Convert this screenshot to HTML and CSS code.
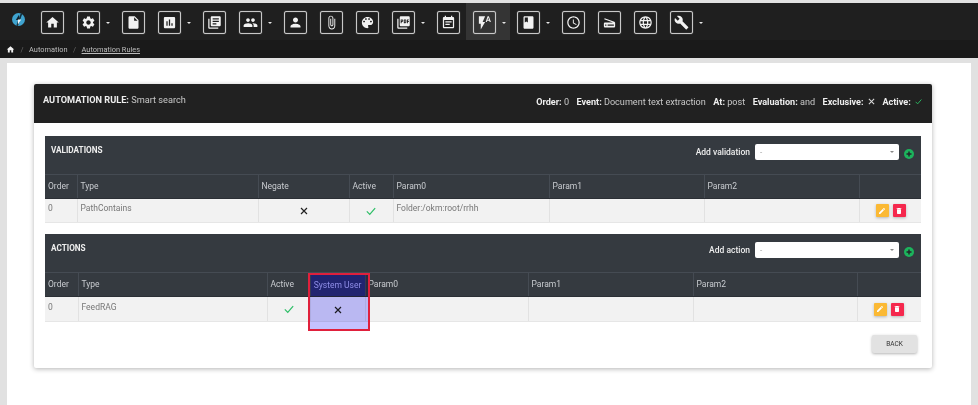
FILE: index.html
```html
<!DOCTYPE html>
<html lang="en">
<head>
    <meta charset="UTF-8">
    <meta name="viewport" content="width=device-width, initial-scale=1.0">
    <title>Automation Rules</title>
    <link rel="stylesheet" href="styles.css">
</head>
<body>
    <svg class="sprite" xmlns="http://www.w3.org/2000/svg">
        <symbol id="i-home" viewBox="0 0 24 24"><path d="M10 20v-6h4v6h5v-8h3L12 3 2 12h3v8z"/></symbol>
        <symbol id="i-gear" viewBox="0 0 24 24"><path d="M19.14 12.94c.04-.3.06-.61.06-.94 0-.32-.02-.64-.07-.94l2.03-1.58c.18-.14.23-.41.12-.61l-1.92-3.32c-.12-.22-.37-.29-.59-.22l-2.39.96c-.5-.38-1.03-.7-1.62-.94l-.36-2.54c-.04-.24-.24-.41-.48-.41h-3.84c-.24 0-.43.17-.47.41l-.36 2.54c-.59.24-1.13.57-1.62.94l-2.39-.96c-.22-.08-.47 0-.59.22L2.74 8.87c-.12.21-.08.47.12.61l2.03 1.58c-.05.3-.09.63-.09.94s.02.64.07.94l-2.03 1.58c-.18.14-.23.41-.12.61l1.92 3.32c.12.22.37.29.59.22l2.39-.96c.5.38 1.03.7 1.62.94l.36 2.54c.05.24.24.41.48.41h3.84c.24 0 .44-.17.47-.41l.36-2.54c.59-.24 1.13-.56 1.62-.94l2.39.96c.22.08.47 0 .59-.22l1.92-3.32c.12-.22.07-.47-.12-.61l-2.01-1.58zM12 15.6c-1.98 0-3.6-1.62-3.6-3.6s1.62-3.6 3.6-3.6 3.6 1.62 3.6 3.6-1.62 3.6-3.6 3.6z"/></symbol>
        <symbol id="i-doc" viewBox="0 0 24 24"><path d="M6 2c-1.1 0-1.99.9-1.99 2L4 20c0 1.1.89 2 1.99 2H18c1.1 0 2-.9 2-2V8l-6-6H6zm7 7V3.5L18.5 9H13z"/></symbol>
        <symbol id="i-chart" viewBox="0 0 24 24"><path d="M19 3H5c-1.1 0-2 .9-2 2v14c0 1.1.9 2 2 2h14c1.1 0 2-.9 2-2V5c0-1.1-.9-2-2-2zM9 17H7v-7h2v7zm4 0h-2V7h2v10zm4 0h-2v-4h2v4z"/></symbol>
        <symbol id="i-library" viewBox="0 0 24 24"><path d="M4 6H2v14c0 1.1.9 2 2 2h14v-2H4V6zm16-4H8c-1.1 0-2 .9-2 2v12c0 1.1.9 2 2 2h12c1.1 0 2-.9 2-2V4c0-1.1-.9-2-2-2zm-1 9H9V9h10v2zm-4 4H9v-2h6v2zm4-8H9V5h10v2z"/></symbol>
        <symbol id="i-people" viewBox="0 0 24 24"><path d="M16 11c1.66 0 2.99-1.34 2.99-3S17.66 5 16 5c-1.66 0-3 1.34-3 3s1.34 3 3 3zm-8 0c1.66 0 2.99-1.34 2.99-3S9.66 5 8 5C6.34 5 5 6.34 5 8s1.34 3 3 3zm0 2c-2.33 0-7 1.17-7 3.5V19h14v-2.5c0-2.33-4.67-3.5-7-3.5zm8 0c-.29 0-.62.02-.97.05 1.16.84 1.97 1.97 1.97 3.45V19h6v-2.5c0-2.33-4.67-3.5-7-3.5z"/></symbol>
        <symbol id="i-person" viewBox="0 0 24 24"><path d="M12 12c2.21 0 4-1.79 4-4s-1.79-4-4-4-4 1.79-4 4 1.79 4 4 4zm0 2c-2.67 0-8 1.34-8 4v2h16v-2c0-2.66-5.33-4-8-4z"/></symbol>
        <symbol id="i-clip" viewBox="0 0 24 24"><path d="M16.5 6v11.5c0 2.21-1.79 4-4 4s-4-1.79-4-4V5c0-1.38 1.12-2.5 2.5-2.5s2.5 1.12 2.5 2.5v10.5c0 .55-.45 1-1 1s-1-.45-1-1V6H10v9.5c0 1.38 1.12 2.5 2.5 2.5s2.5-1.12 2.5-2.5V5c0-2.21-1.79-4-4-4S7 2.79 7 5v12.5c0 3.04 2.46 5.5 5.5 5.5s5.5-2.46 5.5-5.5V6h-1.5z"/></symbol>
        <symbol id="i-palette" viewBox="0 0 24 24"><path d="M12 3c-4.97 0-9 4.03-9 9s4.03 9 9 9c.83 0 1.5-.67 1.5-1.5 0-.39-.15-.74-.39-1.01-.23-.26-.38-.61-.38-.99 0-.83.67-1.5 1.5-1.5H16c2.76 0 5-2.24 5-5 0-4.42-4.03-8-9-8zm-5.5 9c-.83 0-1.5-.67-1.5-1.5S5.67 9 6.5 9 8 9.67 8 10.5 7.33 12 6.5 12zm3-4C8.67 8 8 7.33 8 6.5S8.67 5 9.5 5s1.5.67 1.5 1.5S10.33 8 9.5 8zm5 0c-.83 0-1.5-.67-1.5-1.5S13.67 5 14.5 5s1.5.67 1.5 1.5S15.33 8 14.5 8zm3 4c-.83 0-1.5-.67-1.5-1.5S16.67 9 17.5 9s1.5.67 1.5 1.5-.67 1.5-1.5 1.5z"/></symbol>
        <symbol id="i-pdf" viewBox="0 0 24 24"><path d="M20 2H8c-1.1 0-2 .9-2 2v12c0 1.1.9 2 2 2h12c1.1 0 2-.9 2-2V4c0-1.1-.9-2-2-2zm-8.5 7.5c0 .83-.67 1.5-1.5 1.5H9v2H7.5V7H10c.83 0 1.5.67 1.5 1.5v1zm5 2c0 .83-.67 1.5-1.5 1.5h-2.5V7H15c.83 0 1.5.67 1.5 1.5v3zm4-3H19v1h1.5V11H19v2h-1.5V7h3v1.5zM9 9.5h1v-1H9v1zM4 6H2v14c0 1.1.9 2 2 2h14v-2H4V6zm10 5.5h1v-3h-1v3z"/></symbol>
        <symbol id="i-event" viewBox="0 0 24 24"><path d="M17 10H7v2h10v-2zm2-7h-1V1h-2v2H8V1H6v2H5c-1.11 0-1.99.9-1.99 2L3 19c0 1.1.89 2 2 2h14c1.1 0 2-.9 2-2V5c0-1.1-.9-2-2-2zm0 16H5V8h14v11zm-5-5H7v2h7v-2z"/></symbol>
        <symbol id="i-flash" viewBox="0 0 24 24"><path d="M3 2v12h3v9l7-12H9l4-9H3zm16 0h-2l-3.2 9h1.9l.7-2h3.2l.7 2h1.9L19 2zm-2.15 5.65L18 4l1.15 3.65h-2.3z"/></symbol>
        <symbol id="i-book" viewBox="0 0 24 24"><path d="M18 2H6c-1.1 0-2 .9-2 2v16c0 1.1.9 2 2 2h12c1.1 0 2-.9 2-2V4c0-1.1-.9-2-2-2zM6 4h5v8l-2.500-1.500L6 12V4z"/></symbol>
        <symbol id="i-clock" viewBox="0 0 24 24"><path d="M11.99 2C6.47 2 2 6.48 2 12s4.47 10 9.99 10C17.52 22 22 17.52 22 12S17.52 2 11.99 2zM12 20c-4.42 0-8-3.58-8-8s3.58-8 8-8 8 3.58 8 8-3.58 8-8 8zm.5-13H11v6l5.25 3.15.75-1.23-4.5-2.67z"/></symbol>
        <symbol id="i-scanner" viewBox="0 0 24 24"><path d="M19.8 10.7L4.2 5l-.7 1.9L17.6 12H5c-1.1 0-2 .9-2 2v4c0 1.1.9 2 2 2h14c1.1 0 2-.9 2-2v-5.5c0-.8-.5-1.6-1.2-1.8zM7 17H5v-2h2v2zm12 0H9v-2h10v2z"/></symbol>
        <symbol id="i-globe" viewBox="0 0 24 24"><path d="M11.99 2C6.47 2 2 6.48 2 12s4.47 10 9.99 10C17.52 22 22 17.52 22 12S17.52 2 11.99 2zm6.93 6h-2.95c-.32-1.25-.78-2.45-1.38-3.56 1.84.63 3.37 1.91 4.33 3.56zM12 4.04c.83 1.2 1.48 2.53 1.91 3.96h-3.82c.43-1.43 1.08-2.76 1.91-3.96zM4.26 14C4.1 13.36 4 12.69 4 12s.1-1.36.26-2h3.38c-.08.66-.14 1.32-.14 2 0 .68.06 1.34.14 2H4.26zm.82 2h2.95c.32 1.25.78 2.45 1.38 3.56-1.84-.63-3.37-1.9-4.33-3.56zm2.95-8H5.08c.96-1.66 2.49-2.93 4.33-3.56C8.81 5.55 8.35 6.75 8.03 8zM12 19.96c-.83-1.2-1.48-2.53-1.91-3.96h3.82c-.43 1.43-1.08 2.76-1.91 3.96zM14.34 14H9.66c-.09-.66-.16-1.32-.16-2 0-.68.07-1.35.16-2h4.68c.09.65.16 1.32.16 2 0 .68-.07 1.34-.16 2zm.25 5.56c.6-1.11 1.06-2.31 1.38-3.56h2.95c-.96 1.65-2.49 2.93-4.33 3.56zM16.36 14c.08-.66.14-1.32.14-2 0-.68-.06-1.34-.14-2h3.38c.16.64.26 1.31.26 2s-.1 1.36-.26 2h-3.38z"/></symbol>
        <symbol id="i-wrench" viewBox="0 0 24 24"><path d="M22.7 19l-9.1-9.1c.9-2.3.4-5-1.5-6.9-2-2-5-2.4-7.4-1.3L9 6 6 9 1.6 4.7C.4 7.1.9 10.1 2.9 12.1c1.9 1.9 4.6 2.4 6.9 1.5l9.1 9.1c.4.4 1 .4 1.4 0l2.3-2.3c.5-.4.5-1.1.1-1.4z"/></symbol>
        <symbol id="i-check" viewBox="0 0 24 24"><path d="M2 13l7 7L22 5" fill="none" stroke="currentColor" stroke-width="3"/></symbol>
        <symbol id="i-close" viewBox="0 0 24 24"><path d="M3 3l18 18M21 3L3 21" fill="none" stroke="currentColor" stroke-width="3.500"/></symbol>
        <symbol id="i-plus" viewBox="0 0 24 24"><circle cx="12" cy="12" r="12"/><path d="M12 6v12M6 12h12" stroke="#23262b" stroke-width="3.500"/></symbol>
        <symbol id="i-pencil" viewBox="0 0 24 24"><path d="M3 17.25V21h3.75L17.81 9.94l-3.75-3.75L3 17.25zM20.71 7.04c.39-.39.39-1.02 0-1.41l-2.34-2.34c-.39-.39-1.02-.39-1.41 0l-1.83 1.83 3.75 3.75 1.83-1.83z"/></symbol>
        <symbol id="i-trash" viewBox="0 0 24 24"><path d="M6 19c0 1.1.9 2 2 2h8c1.1 0 2-.9 2-2V7H6v12zM19 4h-3.500l-1-1h-5l-1 1H5v2h14V4z"/></symbol>
    </svg>

    <header class="topbar">
        <nav class="toolbar">
            <a class="logo">
                <svg viewBox="0 0 24 24" width="13" height="13">
                    <circle cx="12" cy="12" r="12" fill="#3fa3cf"/>
                    <path d="M16 0.700L8 23.300 11 24 19 1.500z" fill="#12303f"/>
                    <path d="M13 3v10l-6 0z" fill="#10232e"/>
                    <path d="M11 21V12l6 0z" fill="#f2f6f8"/>
                </svg>
            </a>
            <a class="tool"><span class="tool-box"><svg class="tool-icon"><use href="#i-home"/></svg></span></a>
            <a class="tool has-menu"><span class="tool-box"><svg class="tool-icon"><use href="#i-gear"/></svg></span></a>
            <a class="tool"><span class="tool-box"><svg class="tool-icon"><use href="#i-doc"/></svg></span></a>
            <a class="tool has-menu"><span class="tool-box"><svg class="tool-icon"><use href="#i-chart"/></svg></span></a>
            <a class="tool"><span class="tool-box"><svg class="tool-icon"><use href="#i-library"/></svg></span></a>
            <a class="tool has-menu"><span class="tool-box"><svg class="tool-icon"><use href="#i-people"/></svg></span></a>
            <a class="tool"><span class="tool-box"><svg class="tool-icon"><use href="#i-person"/></svg></span></a>
            <a class="tool"><span class="tool-box"><svg class="tool-icon"><use href="#i-clip"/></svg></span></a>
            <a class="tool"><span class="tool-box"><svg class="tool-icon"><use href="#i-palette"/></svg></span></a>
            <a class="tool has-menu"><span class="tool-box"><svg class="tool-icon"><use href="#i-pdf"/></svg></span></a>
            <a class="tool"><span class="tool-box"><svg class="tool-icon"><use href="#i-event"/></svg></span></a>
            <a class="tool has-menu current"><span class="tool-box"><svg class="tool-icon"><use href="#i-flash"/></svg></span></a>
            <a class="tool has-menu"><span class="tool-box"><svg class="tool-icon"><use href="#i-book"/></svg></span></a>
            <a class="tool"><span class="tool-box"><svg class="tool-icon"><use href="#i-clock"/></svg></span></a>
            <a class="tool"><span class="tool-box"><svg class="tool-icon"><use href="#i-scanner"/></svg></span></a>
            <a class="tool"><span class="tool-box"><svg class="tool-icon"><use href="#i-globe"/></svg></span></a>
            <a class="tool has-menu"><span class="tool-box"><svg class="tool-icon"><use href="#i-wrench"/></svg></span></a>
        </nav>
        <div class="breadcrumb">
            <svg class="crumb-home"><use href="#i-home"/></svg>
            <span class="crumb-sep">/</span>
            <span>Automation</span>
            <span class="crumb-sep">/</span>
            <a class="crumb-link">Automation Rules</a>
        </div>
    </header>

    <main class="content">
        <section class="card">
            <div class="card-head">
                <div class="card-title"><b>AUTOMATION RULE:</b> Smart search</div>
                <div class="card-meta">
                    <span><b>Order:</b> 0</span>
                    <span><b>Event:</b> Document text extraction</span>
                    <span><b>At:</b> post</span>
                    <span><b>Evaluation:</b> and</span>
                    <span><b>Exclusive:</b> <svg class="meta-icon"><use href="#i-close"/></svg></span>
                    <span><b>Active:</b> <svg class="meta-icon meta-ok"><use href="#i-check"/></svg></span>
                </div>
            </div>

            <div class="card-body">
                <div class="panel">
                    <div class="panel-head">
                        <h2 class="panel-title">VALIDATIONS</h2>
                        <div class="add-form">
                            <label class="add-label">Add validation</label>
                            <div class="select-box"><span>-</span><i class="select-caret"></i></div>
                            <svg class="add-btn"><use href="#i-plus"/></svg>
                        </div>
                    </div>
                    <table class="grid grid-validations">
                        <thead>
                            <tr>
                                <th>Order</th><th>Type</th><th>Negate</th><th>Active</th><th>Param0</th><th>Param1</th><th>Param2</th><th></th>
                            </tr>
                        </thead>
                        <tbody>
                            <tr>
                                <td>0</td>
                                <td>PathContains</td>
                                <td class="center"><svg class="mark-x"><use href="#i-close"/></svg></td>
                                <td class="center"><svg class="mark-ok"><use href="#i-check"/></svg></td>
                                <td>Folder:/okm:root/rrhh</td>
                                <td></td>
                                <td></td>
                                <td class="row-actions">
                                    <span class="icon-btn btn-edit"><svg><use href="#i-pencil"/></svg></span>
                                    <span class="icon-btn btn-delete"><svg><use href="#i-trash"/></svg></span>
                                </td>
                            </tr>
                        </tbody>
                    </table>
                </div>

                <div class="panel">
                    <div class="panel-head">
                        <h2 class="panel-title">ACTIONS</h2>
                        <div class="add-form">
                            <label class="add-label">Add action</label>
                            <div class="select-box"><span>-</span><i class="select-caret"></i></div>
                            <svg class="add-btn"><use href="#i-plus"/></svg>
                        </div>
                    </div>
                    <table class="grid grid-actions">
                        <thead>
                            <tr>
                                <th>Order</th><th>Type</th><th>Active</th><th class="center marked">System User</th><th>Param0</th><th>Param1</th><th>Param2</th><th></th>
                            </tr>
                        </thead>
                        <tbody>
                            <tr>
                                <td>0</td>
                                <td>FeedRAG</td>
                                <td class="center"><svg class="mark-ok"><use href="#i-check"/></svg></td>
                                <td class="center"><svg class="mark-x"><use href="#i-close"/></svg></td>
                                <td></td>
                                <td></td>
                                <td></td>
                                <td class="row-actions">
                                    <span class="icon-btn btn-edit"><svg><use href="#i-pencil"/></svg></span>
                                    <span class="icon-btn btn-delete"><svg><use href="#i-trash"/></svg></span>
                                </td>
                            </tr>
                        </tbody>
                    </table>
                    <div class="highlight"><div class="highlight-fill"></div></div>
                </div>

                <div class="card-foot">
                    <button class="back-btn">BACK</button>
                </div>
            </div>
        </section>
    </main>
</body>
</html>
```

FILE: styles.css
```css
* {
    margin: 0;
    padding: 0;
    box-sizing: border-box;
}

html, body {
    height: 405px;
    overflow: hidden;
}

body {
    font-family: Roboto, 'Liberation Sans', sans-serif;
    background: #e1e1e1;
    padding-top: 3px;
}

.sprite {
    display: none;
}

/* top bar */
.topbar {
    background: #1f1f1f;
    height: 55px;
}

.toolbar {
    display: flex;
    height: 37px;
    padding-left: 12px;
}

.logo {
    display: flex;
    width: 22px;
    padding-top: 10px;
}

.tool {
    position: relative;
    width: 36px;
    padding: 8px 0 0 7px;
}

.tool.has-menu {
    width: 45px;
}

.tool.has-menu::after {
    content: '';
    position: absolute;
    left: 36px;
    top: 19px;
    border: 2px solid transparent;
    border-top: 2px solid #e6e6e6;
    border-bottom: 0;
}

.tool.current {
    background: #343434;
    width: 44px;
}

.tool-box {
    display: flex;
    align-items: center;
    justify-content: center;
    width: 23px;
    height: 23px;
    border: 1px solid #c8c8c8;
    border-radius: 2px;
    box-shadow: 0 0 1px #aaa, inset 0 0 1px #999;
}

.tool-icon {
    width: 15px;
    height: 15px;
    fill: #f2f2f2;
}

.breadcrumb {
    display: flex;
    align-items: center;
    gap: 5.500px;
    height: 18px;
    background: #1a1a1a;
    padding-left: 6px;
    font-size: 7.400px;
    color: #bdbdbd;
}

.crumb-home {
    width: 9px;
    height: 9px;
    fill: #f2f2f2;
}

.crumb-sep {
    color: #666;
}

.crumb-link {
    text-decoration: underline;
}

/* page */
.content {
    background: #fff;
    margin: 5px 7px 0;
    height: 342px;
    padding: 21px 39px 0 27px;
}

.card {
    background: #fff;
    border-radius: 2px;
    box-shadow: 0 1px 5px rgba(0, 0, 0, 0.3);
}

.card-head {
    display: flex;
    justify-content: space-between;
    height: 39px;
    background: #212121;
    border-radius: 2px 2px 0 0;
    color: #c8c8c8;
    padding: 0 10px 0 9px;
}

.card-title {
    font-size: 9.200px;
    padding-top: 10px;
}

.card-title b, .card-meta b {
    color: #eee;
    font-weight: 700;
}

.card-meta {
    display: flex;
    gap: 7.500px;
    font-size: 9.100px;
    padding-top: 13px;
}

.meta-icon {
    width: 7px;
    height: 7px;
    margin-left: 2px;
    color: #ddd;
}

.meta-ok {
    color: #2bc166;
}

.card-body {
    padding: 13px 11px 15px;
}

/* validations and actions */
.panel {
    position: relative;
    margin-bottom: 11px;
}

.panel + .panel {
    margin-bottom: 13px;
}

.panel-head {
    display: flex;
    justify-content: space-between;
    height: 38px;
    background: #353a40;
    padding: 8px 7px 0 6px;
}

.panel-title {
    font-size: 8.200px;
    font-weight: 700;
    color: #eee;
    line-height: 10px;
    margin-top: 1px;
}

.add-form {
    display: flex;
    align-items: flex-start;
}

.add-label {
    font-size: 8.500px;
    font-weight: 500;
    color: #eee;
    line-height: 16px;
    margin-right: 5px;
}

.select-box {
    position: relative;
    width: 144px;
    height: 16px;
    background: #fff;
    border-radius: 2px;
    font-size: 8px;
    color: #999;
    padding: 4px 5px 0;
}

.select-caret {
    position: absolute;
    right: 5px;
    top: 7px;
    border: 2px solid transparent;
    border-top: 2px solid #888;
    border-bottom: 0;
}

.add-btn {
    width: 10px;
    height: 10px;
    fill: #1cb45c;
    margin: 5px 0 0 5px;
}

.grid {
    width: 100%;
    border-collapse: collapse;
    table-layout: fixed;
    font-size: 8.500px;
}

.grid th {
    height: 24px;
    background: #353a40;
    color: #c9ccd0;
    font-weight: 400;
    text-align: left;
    padding: 0 3px 2px;
    border-left: 1px solid #454b53;
    border-top: 1px solid #454b53;
    border-bottom: 1px solid #2b2f35;
}

.grid th.marked {
    background: #2b2f70;
    color: #b8b8e6;
}

.grid th:first-child, .grid td:first-child {
    border-left: 0;
}

.grid td {
    height: 24px;
    background: #f2f2f2;
    color: #777;
    padding: 0 3px 5px;
    border-left: 1px solid #e2e2e2;
    border-bottom: 1px solid #e6e6e6;
}

.grid-actions td {
    height: 25px;
}

.grid .center {
    text-align: center;
    padding-bottom: 0;
}

.grid-validations th:nth-child(1) { width: 32px; }
.grid-validations th:nth-child(2) { width: 181px; }
.grid-validations th:nth-child(3) { width: 91px; }
.grid-validations th:nth-child(4) { width: 44px; }
.grid-validations th:nth-child(5) { width: 156px; }
.grid-validations th:nth-child(6) { width: 155px; }
.grid-validations th:nth-child(7) { width: 155px; }

.grid-actions th:nth-child(1) { width: 33px; }
.grid-actions th:nth-child(2) { width: 189px; }
.grid-actions th:nth-child(3) { width: 43px; }
.grid-actions th:nth-child(4) { width: 55px; }
.grid-actions th:nth-child(5) { width: 163px; }
.grid-actions th:nth-child(6) { width: 165px; }
.grid-actions th:nth-child(7) { width: 164px; }

.mark-x {
    width: 8px;
    height: 8px;
    color: #222;
    vertical-align: middle;
}

.mark-ok {
    width: 10px;
    height: 10px;
    color: #2fbf68;
    vertical-align: middle;
}

.grid .row-actions {
    padding: 0 0 0 16px;
    font-size: 0;
}

.icon-btn {
    display: inline-flex;
    align-items: center;
    justify-content: center;
    width: 13px;
    height: 13px;
    border-radius: 1px;
    box-shadow: 0 1px 3px rgba(0, 0, 0, 0.25);
    margin-right: 4px;
    vertical-align: middle;
}

.icon-btn svg {
    width: 8px;
    height: 8px;
    fill: #fff;
}

.btn-edit {
    background: #fbb934;
}

.btn-delete {
    background: #f5284d;
}

/* red box drawn over the System User column */
.highlight {
    position: absolute;
    left: 263px;
    top: 39px;
    width: 62px;
    height: 58px;
    border: 2px solid #e0203c;
}

.highlight-fill {
    height: 100%;
    background: #c4c2ff;
    mix-blend-mode: multiply;
}

.card-foot {
    display: flex;
    justify-content: flex-end;
    padding-right: 4px;
}

.back-btn {
    width: 45px;
    height: 18px;
    background: #e2e2e2;
    border: none;
    border-radius: 2px;
    box-shadow: 0 1px 3px rgba(0, 0, 0, 0.3);
    font-family: inherit;
    font-size: 6.500px;
    color: #333;
}
```
